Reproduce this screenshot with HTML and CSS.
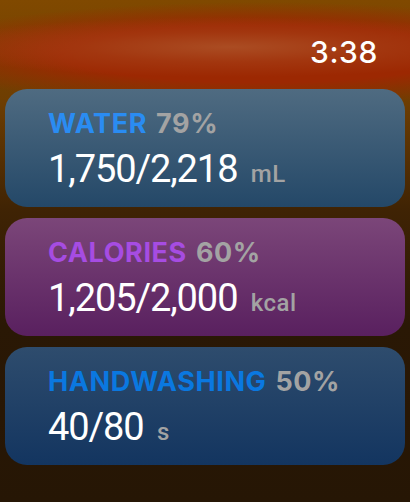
FILE: index.html
```html
<!DOCTYPE html>
<html lang="en">
<head>
    <meta charset="UTF-8">
    <meta name="viewport" content="width=device-width, initial-scale=1.0">
    <title>Goals</title>
    <link rel="stylesheet" href="styles.css">
</head>
<body>

    <header class="status">
        <span class="time">3:38</span>
    </header>

    <main class="list">
        <div class="card water">
            <p class="title"><span class="name">WATER</span> <span class="pct">79%</span></p>
            <p class="value">1,750/2,218 <span class="unit">mL</span></p>
        </div>

        <div class="card calories">
            <p class="title"><span class="name">CALORIES</span> <span class="pct">60%</span></p>
            <p class="value">1,205/2,000 <span class="unit">kcal</span></p>
        </div>

        <div class="card hands">
            <p class="title"><span class="name">HANDWASHING</span> <span class="pct">50%</span></p>
            <p class="value">40/80 <span class="unit">s</span></p>
        </div>
    </main>

</body>
</html>
```

FILE: styles.css
```css
html {
    background: #261605;
}

body {
    margin: 0;
    height: 502px;
    font-family: Roboto, "Noto Sans", sans-serif;
    color: #fff;
    overflow: hidden;
    background:
        radial-gradient(ellipse 300px 30px at 230px 47px, rgba(172, 80, 38, 0.9) 0%, rgba(165, 60, 20, 0.7) 50%, rgba(154, 42, 4, 0) 100%),
        radial-gradient(ellipse 360px 52px at 260px 54px, rgba(156, 40, 2, 1) 55%, rgba(156, 40, 2, 0) 100%),
        linear-gradient(to bottom, #804900 0%, #6e3e02 20%, #3f2304 42%, #2a1805 65%, #261605 100%);
}

/* 状态栏 */
.status {
    height: 89px;
    display: flex;
    justify-content: flex-end;
    align-items: flex-start;
    padding-right: 32px;
    box-sizing: border-box;
}

.time {
    margin-top: 32px;
    font-family: Inter, Roboto, sans-serif;
    font-size: 30px;
    font-weight: 500;
    letter-spacing: 0.6px;
    line-height: 40px;
}

.list {
    display: flex;
    flex-direction: column;
    gap: 11px;
    padding: 0 5px;
}

.card {
    height: 118px;
    box-sizing: border-box;
    border-radius: 22px;
    padding: 18px 0 0 43px;
}

.water {
    background: linear-gradient(to bottom, #4f6b81, #244868);
}

.calories {
    background: linear-gradient(to bottom, #7b4679, #59205f);
}

.hands {
    background: linear-gradient(to bottom, #2e4c6d, #133560);
}

.title {
    margin: 0;
    font-family: Inter, Roboto, sans-serif;
    font-size: 27px;
    font-weight: 700;
    line-height: 34px;
    letter-spacing: 0.6px;
    word-spacing: 2px;
}

.pct {
    color: #a3a3a3;
}

.water .name { color: #2a8cf2; }
.calories .name { color: #a64ce2; }
.hands .name { color: #0a78e0; }

.value {
    margin: 5px 0 0;
    font-size: 38px;
    line-height: 46px;
    letter-spacing: -1.1px;
}

.unit {
    font-size: 24px;
    font-weight: 500;
    color: #a3a3a3;
    letter-spacing: 0.5px;
    margin-left: 5px;
}
```
